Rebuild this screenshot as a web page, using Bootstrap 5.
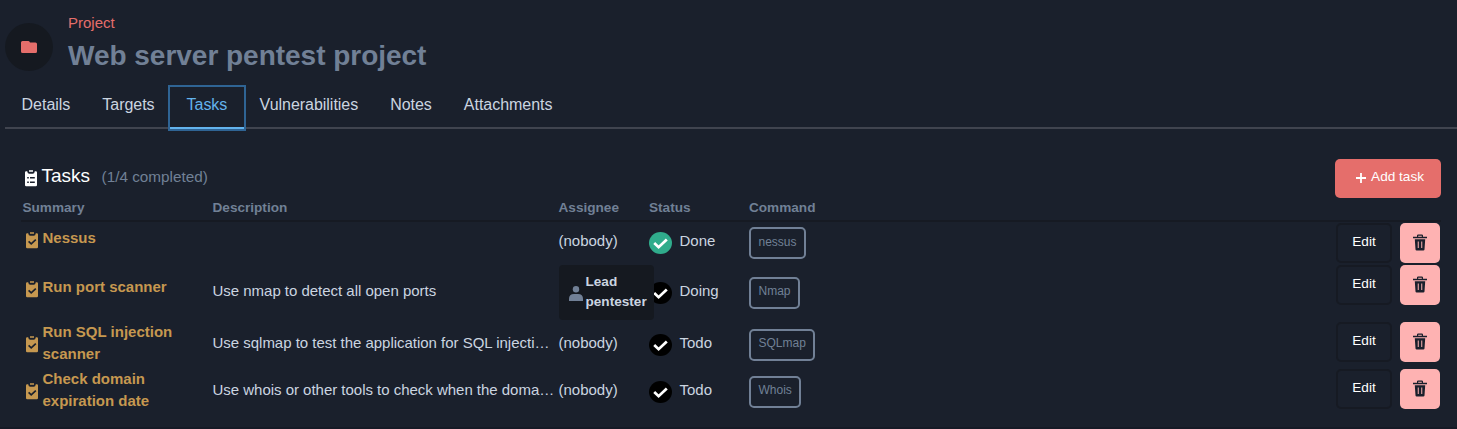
<!DOCTYPE html>
<html lang="en">
<head>
<meta charset="utf-8">
<title>Web server pentest project</title>
<meta name="viewport" content="width=device-width, initial-scale=1">
<link href="https://cdn.jsdelivr.net/npm/bootstrap@5.3.0/dist/css/bootstrap.min.css" rel="stylesheet">
<style>
body{background:#1a202c;color:#cbd5e0;font-family:"Liberation Sans",Arial,sans-serif;font-size:15px;line-height:22px;height:429px;overflow:hidden}
.page-head{height:85px;padding:0 0 0 5px}
.avatar{width:48px;height:48px;background:#151920;margin-top:23px;margin-right:15px}
.kicker{color:#e56e6b;margin-top:12px;height:22px}
.headline{color:#718096;font-size:28px;line-height:34px;font-weight:700;margin:5px 0 0;letter-spacing:-.02px}
.tabs{height:44px;margin-left:5px;padding-left:.6px;border-bottom:2px solid #40444f}
.tabs .nav-link{color:#cbd5e0;font-size:16px;line-height:24px;padding:8px 16px 0;height:44px;border-radius:0;letter-spacing:-.03px}
.tabs .nav-link.active{color:#63b3ed;border-bottom:2px solid #63b3ed;box-shadow:0 0 0 2px #2f6494;position:relative;height:42px;margin-top:2px;padding:6px 16.6px 0;margin-left:-.6px;margin-right:-.3px}
.panel{padding:30px 16px 0 21px}
.panel-head{height:39px}
.panel-title{font-size:19px;line-height:24px;color:#fff;font-weight:400;margin:-6px 11.5px 0 .5px}
.muted{color:#718096}
.count{font-size:15.3px;margin-top:-4px}
.btn-add{background:#e56e6b;color:#fff;font-size:13.6px;line-height:20px;width:106px;height:39px;border-radius:5px;padding:7px 16px 0 20px}
.btn-add svg{margin-top:6px}
.task-row{display:grid;grid-template-columns:190px 346px 90.5px 100px 1fr 105px;padding-left:1.5px;align-items:center}
.task-head{height:24px;border-bottom:2px solid #161a23;color:#718096;font-size:13.6px;font-weight:700;line-height:18px;align-items:start;padding-top:1px}
.first{height:42px}.second{height:57px}.tall{height:47px}
.summary{color:#c69850;font-weight:700;padding-left:3px}
.summary svg{flex:none;margin-right:5px}
.summary span{width:136px}
.one{padding-bottom:6px}
.one span{margin-top:-4px}
.second .one{padding-bottom:7px}
.two span{margin-top:-3px}
.cell-text{padding-bottom:4px;white-space:nowrap}
.desc{letter-spacing:-.02px}
.member{background:#151920;border-radius:4px;width:95px;height:55px;font-size:13.6px;line-height:20px;font-weight:700;padding:0 7px 2px 10px;position:relative;z-index:1}
.member svg{margin-right:3px}
.status svg{flex:none;margin-right:7.5px}
.status span{margin-top:-4px}
.cmd{border:2px solid #718096;border-radius:5px;color:#718096;font-size:12px;line-height:18px;height:32px;padding:4px 7.5px 0;display:inline-block;vertical-align:top}
.second .cmd,.tall .cmd{padding-top:3px}
.actions{align-self:start;padding-top:1px;gap:8px}
.btn-edit{width:56px;height:40px;border:2px solid #161a23;border-radius:5px;color:#fff;font-size:13.6px;line-height:20px;padding:7px 0 0}
.btn-trash{width:40px;height:40px;background:#feb2b2;border-radius:5px;padding:0 0 1px}
.bottom-line{position:absolute;left:0;right:0;bottom:0;height:2px;background:#161a26}
</style>
</head>
<body>
<svg class="d-none" xmlns="http://www.w3.org/2000/svg">
<symbol id="task" viewBox="0 0 12 17"><path fill="currentColor" d="M1.2 1.2H2.2Q2.5 3.8 4.3 3.8H7.7Q9.5 3.8 9.8 1.2H10.8Q12 1.2 12 2.4V15Q12 16.2 10.8 16.2H1.2Q0 16.2 0 15V2.4Q0 1.2 1.2 1.2ZM4 .2H8V1.8H4Z"/><path d="M2.6 9.4 5.2 11.8 9.8 7.6" fill="none" stroke="#1a202c" stroke-width="1.7"/></symbol>
<symbol id="check" viewBox="0 0 23 22"><ellipse cx="11.5" cy="11" rx="11.5" ry="11" fill="currentColor"/><path d="M5.2 11 9.6 15.2 17.8 7.4" fill="none" stroke="#fff" stroke-width="2.7"/></symbol>
<symbol id="trash" viewBox="0 0 14 17"><path fill="#1a202c" fill-rule="evenodd" d="M4 2.8V1.6Q4 .5 5.2 .5H8.8Q10 .5 10 1.6V2.8H14V4.2H0V2.8ZM5.2 2.8H8.8V1.7H5.2ZM1.8 5.3H12.2L11.5 15.4Q11.4 16.5 10.3 16.5H3.7Q2.6 16.5 2.5 15.4Z"/><path d="M5.3 7.5V14M8.7 7.5V14" stroke="#d89a9c" stroke-width="1.2"/></symbol>
</svg>
<header class="page-head d-flex align-items-start">
<div class="avatar rounded-circle d-flex align-items-center justify-content-center"><svg width="16" height="12" viewBox="0 0 16 12"><path fill="#e56e6b" d="M1.5 0H7.5Q8.5 0 9 1.5H14.5Q16 1.5 16 3V10.5Q16 12 14.5 12H1.5Q0 12 0 10.5V1.5Q0 0 1.5 0Z"/></svg></div>
<div><div class="kicker">Project</div><h1 class="headline">Web server pentest project</h1></div>
</header>
<nav class="nav tabs flex-nowrap">
<a class="nav-link">Details</a><a class="nav-link">Targets</a><a class="nav-link active">Tasks</a><a class="nav-link">Vulnerabilities</a><a class="nav-link">Notes</a><a class="nav-link">Attachments</a>
</nav>
<main class="panel">
<div class="panel-head d-flex align-items-center">
<svg class="ms-1 me-1" width="12" height="17" viewBox="0 0 12 17"><path fill="#fff" d="M1.2 1.2H2.2Q2.5 3.8 4.3 3.8H7.7Q9.5 3.8 9.8 1.2H10.8Q12 1.2 12 2.4V15Q12 16.2 10.8 16.2H1.2Q0 16.2 0 15V2.4Q0 1.2 1.2 1.2ZM4 .2H8V1.8H4Z"/><path d="M2.2 7.8H3.8M5 7.8H9.8M2.2 12.3H3.8M5 12.3H9.8" stroke="#1a202c" stroke-width="1.5"/></svg>
<h2 class="panel-title">Tasks</h2><span class="muted count">(1/4 completed)</span>
<button class="btn btn-add ms-auto d-flex align-items-start justify-content-between"><svg width="10" height="10" viewBox="0 0 10 10"><path d="M5 0V10M0 5H10" stroke="#fff" stroke-width="1.8"/></svg>Add task</button>
</div>
<div class="task-row task-head"><div>Summary</div><div>Description</div><div>Assignee</div><div>Status</div><div>Command</div><div></div></div>
<div class="task-row first">
<div class="summary one d-flex align-items-center"><svg width="12" height="17"><use href="#task"/></svg><span>Nessus</span></div><div></div><div class="cell-text">(nobody)</div>
<div class="status d-flex align-items-center"><svg width="23" height="22" color="#30ac8c"><use href="#check"/></svg><span>Done</span></div><div><span class="cmd">nessus</span></div>
<div class="actions d-flex"><button class="btn btn-edit d-flex justify-content-center align-items-start">Edit</button><button class="btn btn-trash d-flex justify-content-center align-items-center"><svg width="14" height="17"><use href="#trash"/></svg></button></div>
</div>
<div class="task-row second">
<div class="summary one d-flex align-items-center"><svg width="12" height="17"><use href="#task"/></svg><span>Run port scanner</span></div><div class="cell-text desc">Use nmap to detect all open ports</div>
<div><div class="member d-flex align-items-center"><svg class="flex-shrink-0 mt-1" width="14" height="15" viewBox="0 0 14 15"><circle cx="7" cy="3.2" r="3.2" fill="#718096"/><path fill="#718096" d="M0 15V13Q0 8 5 8H9Q14 8 14 13V15Z"/></svg><span>Lead pentester</span></div></div>
<div class="status d-flex align-items-center"><svg width="23" height="22" color="#000"><use href="#check"/></svg><span>Doing</span></div><div><span class="cmd">Nmap</span></div>
<div class="actions d-flex"><button class="btn btn-edit d-flex justify-content-center align-items-start">Edit</button><button class="btn btn-trash d-flex justify-content-center align-items-center"><svg width="14" height="17"><use href="#trash"/></svg></button></div>
</div>
<div class="task-row tall">
<div class="summary two d-flex align-items-center"><svg width="12" height="17"><use href="#task"/></svg><span>Run SQL injection scanner</span></div><div class="cell-text desc">Use sqlmap to test the application for SQL injecti…</div><div class="cell-text">(nobody)</div>
<div class="status d-flex align-items-center"><svg width="23" height="22" color="#000"><use href="#check"/></svg><span>Todo</span></div><div><span class="cmd">SQLmap</span></div>
<div class="actions d-flex"><button class="btn btn-edit d-flex justify-content-center align-items-start">Edit</button><button class="btn btn-trash d-flex justify-content-center align-items-center"><svg width="14" height="17"><use href="#trash"/></svg></button></div>
</div>
<div class="task-row tall">
<div class="summary two d-flex align-items-center"><svg width="12" height="17"><use href="#task"/></svg><span>Check domain expiration date</span></div><div class="cell-text desc">Use whois or other tools to check when the doma…</div><div class="cell-text">(nobody)</div>
<div class="status d-flex align-items-center"><svg width="23" height="22" color="#000"><use href="#check"/></svg><span>Todo</span></div><div><span class="cmd">Whois</span></div>
<div class="actions d-flex"><button class="btn btn-edit d-flex justify-content-center align-items-start">Edit</button><button class="btn btn-trash d-flex justify-content-center align-items-center"><svg width="14" height="17"><use href="#trash"/></svg></button></div>
</div>
</main>
<div class="bottom-line"></div>
<script src="https://cdn.jsdelivr.net/npm/bootstrap@5.3.0/dist/js/bootstrap.bundle.min.js"></script>
</body>
</html>
